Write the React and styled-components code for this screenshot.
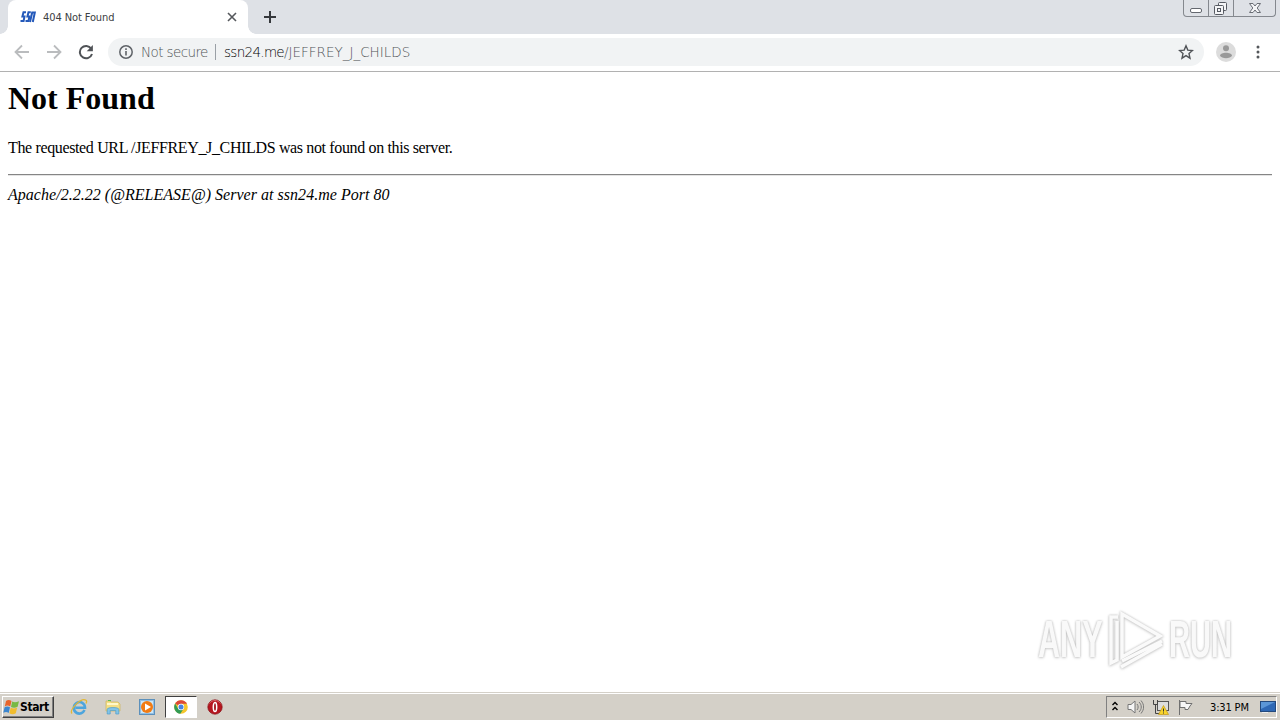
import React from 'react';
import styled, { createGlobalStyle } from 'styled-components';

const GlobalStyle = createGlobalStyle`
  * {
    box-sizing: border-box;
  }
  body {
    margin: 0;
    background: #fff;
    overflow: hidden;
  }
  svg {
    display: block;
    flex: none;
  }
`;

const Screen = styled.div`
  display: flex;
  flex-direction: column;
  width: 1280px;
  height: 720px;
  background: #fff;
  font-family: 'DejaVu Sans Condensed', 'DejaVu Sans', sans-serif;
  font-stretch: condensed;
`;

const TabStrip = styled.div`
  display: flex;
  height: 34px;
  flex: none;
  padding: 0 3px 0 8px;
  background: #dee1e6;
`;

const Tab = styled.div`
  position: relative;
  display: flex;
  align-items: center;
  width: 240px;
  height: 34px;
  padding: 0 10px 0 12px;
  border-radius: 8px 8px 0 0;
  background: #fff;
  &::before,
  &::after {
    content: '';
    position: absolute;
    bottom: 0;
    width: 8px;
    height: 8px;
  }
  &::before {
    left: -8px;
    background: radial-gradient(circle at 0 0, transparent 7.5px, #fff 8px);
  }
  &::after {
    right: -8px;
    background: radial-gradient(circle at 100% 0, transparent 7.5px, #fff 8px);
  }
`;

const TabTitle = styled.span`
  flex: 1;
  margin-left: 7px;
  font-size: 11px;
  letter-spacing: -0.1px;
  color: #3c4043;
`;

const NewTab = styled.div`
  display: flex;
  align-items: center;
  margin-left: 15px;
`;

const WindowButtons = styled.div`
  display: flex;
  height: 17px;
  margin-left: auto;
  margin-right: 1px;
  border: 1px solid #84888e;
  border-top: 0;
  border-radius: 0 0 4px 4px;
`;

const WindowButton = styled.div`
  display: flex;
  justify-content: center;
  width: ${({ $width }) => $width}px;
  border-right: ${({ $last }) => ($last ? '0' : '1px solid #84888e')};
`;

const Toolbar = styled.div`
  display: flex;
  align-items: center;
  height: 38px;
  flex: none;
  padding: 0 14px 2px 14px;
  border-bottom: 1px solid #b1b1b1;
`;

const NavButtons = styled.div`
  display: flex;
  gap: 16px;
  width: 94px;
  flex: none;
`;

const AddressBar = styled.div`
  display: flex;
  align-items: center;
  width: 1096px;
  height: 28px;
  padding: 0 10px;
  border-radius: 14px;
  background: #f1f3f4;
  font-family: 'DejaVu Sans Light', 'DejaVu Sans', sans-serif;
  font-stretch: normal;
  font-weight: 200;
  font-size: 13.5px;
  color: #505357;
  white-space: nowrap;
`;

const Security = styled.span`
  width: 67px;
  margin-left: 7px;
  letter-spacing: -0.6px;
`;

const Divider = styled.span`
  width: 1px;
  height: 16px;
  margin: 0 8px 0 7px;
  background: #9aa0a6;
`;

const Url = styled.span`
  flex: 1;
`;

const Host = styled.span`
  letter-spacing: -0.7px;
  color: #000;
`;

const ToolbarEnd = styled.div`
  display: flex;
  align-items: center;
  gap: 14px;
  margin-left: 12px;
`;

const Page = styled.main`
  position: relative;
  flex: 1;
  padding: 8px;
  font-family: 'Liberation Serif', serif;
  font-size: 16px;
  color: #000;
`;

const Heading = styled.h1`
  margin: 0 0 21px;
  font-size: 32px;
  line-height: 37px;
`;

const Message = styled.p`
  margin: 0 0 16px;
  line-height: 20px;
  letter-spacing: -0.36px;
`;

const Rule = styled.hr`
  height: 2px;
  margin: 0 0 9px;
  border: 0;
  border-top: 1px solid #858585;
  border-bottom: 1px solid #e4e4e4;
`;

const Signature = styled.address`
  line-height: 20px;
  letter-spacing: 0.03px;
`;

const Watermark = styled.div`
  position: absolute;
  right: 46px;
  bottom: 19px;
  display: flex;
  align-items: center;
  filter: drop-shadow(0 0 1px #bbb) drop-shadow(0 1px 1px #e2e2e2);
`;

const Brand = styled.span`
  display: block;
  width: ${({ $width }) => $width}px;
  font-family: 'Liberation Sans Narrow', 'Liberation Sans', sans-serif;
  font-size: 51px;
  font-weight: bold;
  line-height: 66px;
  color: #f9f9f9;
  transform: scaleX(${({ $scale }) => $scale});
  transform-origin: left;
`;

const Taskbar = styled.footer`
  display: flex;
  align-items: center;
  height: 28px;
  flex: none;
  padding: 2px 3px 1px 2px;
  border-top: 1px solid #d4d0c8;
  box-shadow: inset 0 1px #fff;
  background: #d4d0c8;
`;

const StartButton = styled.div`
  display: flex;
  align-items: center;
  width: 52px;
  height: 22px;
  padding-left: 0;
  border: 1px solid;
  border-color: #fff #404040 #404040 #fff;
  box-shadow: inset -1px -1px #808080;
  font-size: 12px;
  font-weight: bold;
  letter-spacing: -0.4px;
  color: #000;
`;

const Launcher = styled.div`
  display: flex;
  margin-left: 9px;
  gap: 2px;
`;

const Launch = styled.div`
  display: flex;
  align-items: center;
  justify-content: center;
  width: 32px;
  height: 22px;
  border: 1px solid;
  border-color: ${({ $active }) => ($active ? '#404040 #fff #fff #404040' : 'transparent')};
  background: ${({ $active }) => ($active ? '#fff' : 'transparent')};
`;

const Tray = styled.div`
  display: flex;
  align-items: center;
  width: 171px;
  height: 22px;
  margin-left: auto;
  padding-left: 4px;
  border: 1px solid;
  border-color: #808080 #fff #fff #808080;
`;

const Clock = styled.span`
  width: 51px;
  margin-left: 16px;
  font-size: 11px;
  letter-spacing: -0.15px;
  white-space: nowrap;
  color: #000;
`;

const TrayIcons = styled.div`
  display: flex;
  align-items: center;
  gap: 8px;
`;

function SiteIcon() {
  return (
    <svg width="16" height="16" viewBox="0 0 16 16" fill="none" stroke="#2459ba" strokeWidth="2">
      <path d="M6 3.2H3.5L2.4 7.5H4.5L3.6 12H.5M10.8 3.2H8.5L7.4 7.5H9.4L8.5 12H5.5" />
      <path d="M10 13L12.2 3.5H14.8L12.8 13" />
    </svg>
  );
}

function BackIcon({ flip }) {
  return (
    <svg width="16" height="16" viewBox="0 0 16 16" fill="none" stroke="#babcbe" strokeWidth="1.8">
      <path d={flip ? 'M1 8H14M8 1.5L14.5 8L8 14.5' : 'M15 8H2M8 1.5L1.5 8L8 14.5'} />
    </svg>
  );
}

function ReloadIcon() {
  return (
    <svg width="16" height="16" viewBox="0 0 16 16">
      <path d="M13.2 4.6A6.2 6.2 0 1 0 14 10" fill="none" stroke="#505357" strokeWidth="2" />
      <path d="M14.9 1V7.2H8.7Z" fill="#505357" />
    </svg>
  );
}

function StartFlag() {
  return (
    <svg width="17" height="17" viewBox="0 0 17 17">
      <path d="M3 2C5 .3 7 1 8.5 2L7.2 7.5C5.4 6.4 3.7 6.3 1.8 7.4Z" fill="#e7642b" />
      <path d="M9.2 2.4C11 3.5 13 3.5 16 2.2L14.6 7.8C12 9 10 9 8 7.9Z" fill="#78b943" />
      <path d="M1.6 8.2C3.6 7.1 5.3 7.3 7 8.3L5.7 13.9C4 12.8 2.3 12.8.3 13.8Z" fill="#3b86cf" />
      <path d="M7.7 8.7C9.7 9.8 11.7 9.7 14.2 8.6L12.8 14.2C10.6 15.5 8.6 15.5 6.4 14.3Z" fill="#f1bd2e" />
    </svg>
  );
}

function ExplorerIcon() {
  return (
    <svg width="18" height="18" viewBox="0 0 18 18" fill="none">
      <path d="M14.5 12C13 15.3 9.6 16.5 6.8 15C2.8 12.8 3 7 6.8 4.8C10.6 2.6 15 5.3 15 9.8H5.5" stroke="#4da5dd" strokeWidth="2.6" />
      <path d="M2 15.5C-1 12 11-1 16 2.2C17 3 16.8 4 16 5.5" stroke="#e2b735" strokeWidth="1.3" />
    </svg>
  );
}

function FolderIcon() {
  return (
    <svg width="18" height="18" viewBox="0 0 18 18">
      <path d="M2 3H6L7 4H14L16 6V13H2Z" fill="#f4df86" stroke="#ccb45b" strokeWidth=".7" />
      <path d="M3 5H14V7H3Z" fill="#fff8c9" />
      <path d="M4 2.5H7" stroke="#5abf52" />
      <path d="M3.2 16V11.2C3.2 9 14.8 9 14.8 11.2V16H11.8V12.5H6.2V16Z" fill="#82c4e8" stroke="#4e9dcb" strokeWidth=".7" />
    </svg>
  );
}

function PlayerIcon() {
  return (
    <svg width="18" height="18" viewBox="0 0 18 18">
      <rect x="1.5" y="1.5" width="15" height="15" fill="#91bfe4" stroke="#5c90bb" />
      <rect x="3" y="3" width="12" height="12" fill="#cce7f7" />
      <circle cx="9" cy="9" r="6" fill="#f17b13" />
      <path d="M7 5.5V12.5L13 9Z" fill="#fff" />
    </svg>
  );
}

function ChromeIcon() {
  return (
    <svg width="16" height="16" viewBox="0 0 16 16">
      <circle cx="8" cy="8" r="6.8" fill="#f5c62c" />
      <path d="M8 8L2.1 4.6A6.8 6.8 0 0 1 14 4.8H8Z" fill="#dc4839" />
      <path d="M2.1 4.6A6.8 6.8 0 0 0 7.3 14.8L10.7 9.5L8 8L5 9.5Z" fill="#329b55" />
      <circle cx="8" cy="8" r="3.2" fill="#fff" />
      <circle cx="8" cy="8" r="2.5" fill="#4683e2" />
    </svg>
  );
}

function OperaIcon() {
  return (
    <svg width="16" height="16" viewBox="0 0 16 16">
      <circle cx="8" cy="8" r="7.2" fill="#b6161f" stroke="#861016" strokeWidth=".7" />
      <path d="M2.5 4.5C5 .5 11 .5 13.5 4.5" fill="none" stroke="#d96468" />
      <ellipse cx="8" cy="8" rx="1.7" ry="4.6" fill="#a31a20" stroke="#fff" strokeWidth="1.5" />
    </svg>
  );
}

function App() {
  return (
    <>
      <GlobalStyle />
      <Screen>
        <TabStrip>
          <Tab>
            <SiteIcon />
            <TabTitle>404 Not Found</TabTitle>
            <svg width="12" height="12" viewBox="0 0 12 12" stroke="#55585c" strokeWidth="1.6">
              <path d="M2 2L10 10M10 2L2 10" />
            </svg>
          </Tab>
          <NewTab>
            <svg width="14" height="14" viewBox="0 0 14 14" stroke="#35383c" strokeWidth="2">
              <path d="M1 7H13M7 1V13" />
            </svg>
          </NewTab>
          <WindowButtons>
            <WindowButton $width={25}>
              <svg width="24" height="16" viewBox="0 0 24 16" fill="#fff" stroke="#64686f">
                <rect x="6.5" y="8.5" width="11" height="4" rx="1.5" />
              </svg>
            </WindowButton>
            <WindowButton $width={25}>
              <svg width="24" height="16" viewBox="0 0 24 16" fill="#f4f5f7" stroke="#565a62">
                <rect x="9.5" y="2.5" width="8" height="8" rx="1" />
                <rect x="5.5" y="5.5" width="9" height="9" rx="1" />
                <rect x="8.5" y="8.5" width="3" height="3" />
              </svg>
            </WindowButton>
            <WindowButton $width={41} $last>
              <svg width="24" height="16" viewBox="0 0 24 16" fill="#f4f5f7" stroke="#6a6e75">
                <path d="M6.5 3.5H10L12 6L14 3.5H17.5L14.2 8L17.5 12.5H14L12 10L10 12.5H6.5L9.8 8Z" />
              </svg>
            </WindowButton>
          </WindowButtons>
        </TabStrip>
        <Toolbar>
          <NavButtons>
            <BackIcon />
            <BackIcon flip />
            <ReloadIcon />
          </NavButtons>
          <AddressBar>
            <svg width="16" height="16" viewBox="0 0 16 16" fill="none" stroke="#5f6368">
              <circle cx="8" cy="8" r="6.2" strokeWidth="1.5" />
              <path d="M8 7V11.5M8 4.3V6" strokeWidth="1.6" />
            </svg>
            <Security>Not secure</Security>
            <Divider />
            <Url>
              <Host>ssn24.me</Host>/JEFFREY_J_CHILDS
            </Url>
            <svg width="16" height="16" viewBox="0 0 16 16" fill="none" stroke="#505357" strokeWidth="1.4">
              <path d="M8 1.8L9.8 6.1L14.5 6.5L11 9.6L12 14.2L8 11.7L4 14.2L5 9.6L1.5 6.5L6.2 6.1Z" />
            </svg>
          </AddressBar>
          <ToolbarEnd>
            <svg width="20" height="20" viewBox="0 0 20 20">
              <circle cx="10" cy="10" r="10" fill="#dcdcdc" />
              <circle cx="10" cy="6.2" r="3" fill="#999" />
              <path d="M4 13.8C4 9.7 16 9.7 16 13.8C14.5 17 5.5 17 4 13.8Z" fill="#999" />
            </svg>
            <svg width="16" height="16" viewBox="0 0 16 16" fill="#54575b">
              <circle cx="8" cy="3" r="1.5" />
              <circle cx="8" cy="8" r="1.5" />
              <circle cx="8" cy="13" r="1.5" />
            </svg>
          </ToolbarEnd>
        </Toolbar>
        <Page>
          <Heading>Not Found</Heading>
          <Message>The requested URL /JEFFREY_J_CHILDS was not found on this server.</Message>
          <Rule />
          <Signature>Apache/2.2.22 (@RELEASE@) Server at ssn24.me Port 80</Signature>
          <Watermark>
            <Brand $width={69} $scale={0.6}>ANY</Brand>
            <svg width="62" height="66" viewBox="0 0 62 66" fill="none" stroke="#fafafa" strokeWidth="3.5">
              <path d="M15 7V50L53 29Z" />
              <path d="M11 10H4V56L10 53V14M15 54L55 34M14 60L55 37" />
            </svg>
            <Brand $width={65} $scale={0.57}>RUN</Brand>
          </Watermark>
        </Page>
        <Taskbar>
          <StartButton>
            <StartFlag />
            Start
          </StartButton>
          <Launcher>
            <Launch><ExplorerIcon /></Launch>
            <Launch><FolderIcon /></Launch>
            <Launch><PlayerIcon /></Launch>
            <Launch $active><ChromeIcon /></Launch>
            <Launch><OperaIcon /></Launch>
          </Launcher>
          <Tray>
            <TrayIcons>
              <svg width="8" height="12" viewBox="0 0 8 12" fill="none" stroke="#000" strokeWidth="1.4">
                <path d="M1.5 4L4 1.5L6.5 4M1.5 9L4 6.5L6.5 9" />
              </svg>
              <svg width="17" height="16" viewBox="0 0 17 16" fill="#f5f5f5" stroke="#777">
                <path d="M1 5.5H4L8 2V14L4 10.5H1Z" />
                <path d="M10 5C11.5 7 11.5 9 10 11M12 3C15 6 15 10 12 13M14 1.5C17.5 6 17.5 10 14 14.5" fill="none" />
              </svg>
              <svg width="17" height="17" viewBox="0 0 17 17">
                <rect x="5.5" y="2.5" width="11" height="9" fill="#ddd" stroke="#555" />
                <path d="M1.5 1V5.5H5.5V1M3.5 5V14.5H10" fill="none" stroke="#444" />
                <path d="M11.5 6.5L16.5 15.5H6.5Z" fill="#f8d42b" stroke="#c49a16" strokeWidth=".7" />
                <path d="M11.5 9.5V12.5M11.5 13.5V14.5" stroke="#333" />
              </svg>
              <svg width="17" height="17" viewBox="0 0 17 17" fill="#f7f7f7" stroke="#707070">
                <path d="M2.5 1V16M3 2.5H9V4.5H15L13 7L11 10.5H8V8.5H3Z" />
              </svg>
            </TrayIcons>
            <Clock>3:31 PM</Clock>
            <svg width="16" height="14" viewBox="0 0 16 14">
              <rect x=".5" y="1.5" width="15" height="10" fill="#2e68b5" stroke="#23497d" />
              <path d="M1 2H15L1 9Z" fill="#5b96d7" />
              <path d="M2 12.5H8" stroke="#eee" />
            </svg>
          </Tray>
        </Taskbar>
      </Screen>
    </>
  );
}

export default App;
